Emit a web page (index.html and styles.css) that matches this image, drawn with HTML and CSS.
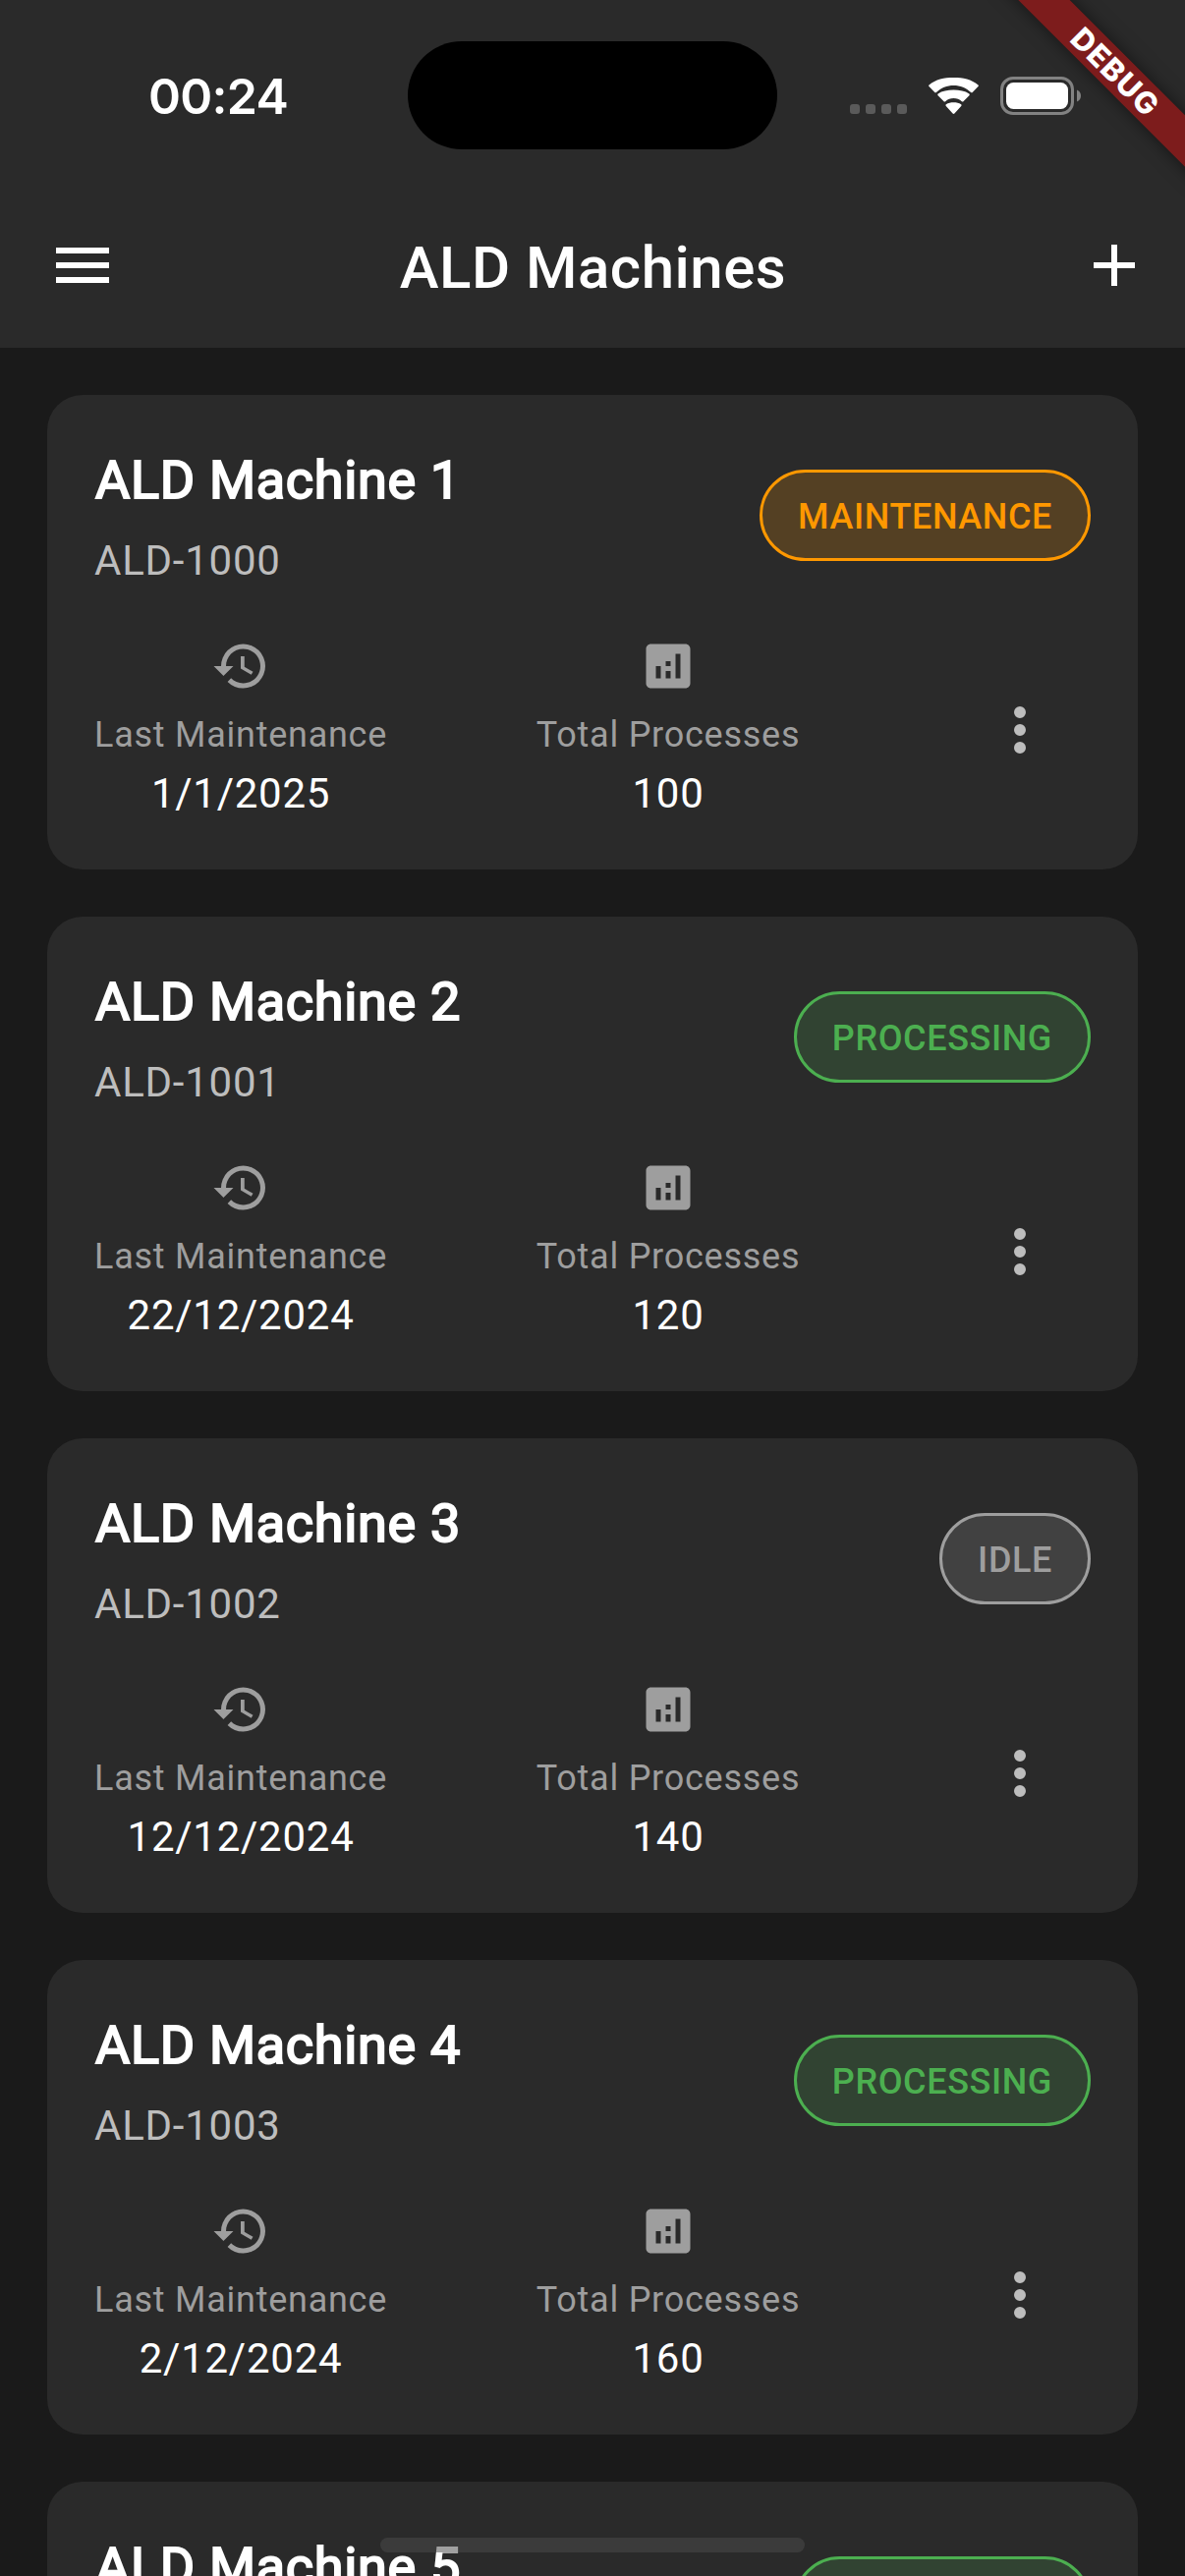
FILE: index.html
```html
<!DOCTYPE html>
<html lang="en">
<head>
<meta charset="utf-8">
<title>ALD Machines</title>
<link rel="stylesheet" href="styles.css">
</head>
<body>
<svg class="sprite" aria-hidden="true">
  <symbol id="history" viewBox="0 0 24 24"><path d="M13 3a9 9 0 0 0-9 9H1l3.890 3.890.07.14L9 12H6c0-3.870 3.130-7 7-7s7 3.130 7 7-3.130 7-7 7c-1.930 0-3.680-.79-4.940-2.060l-1.420 1.420A8.954 8.954 0 0 0 13 21a9 9 0 0 0 0-18zm-1 5v5l4.280 2.540.72-1.210-3.500-2.080V8H12z"/></symbol>
  <symbol id="analytics" viewBox="0 0 24 24"><path d="M19 3H5c-1.100 0-2 .9-2 2v14c0 1.100.9 2 2 2h14c1.100 0 2-.9 2-2V5c0-1.100-.9-2-2-2zM9 17H7v-5h2v5zm4 0h-2v-3h2v3zm0-5h-2v-2h2v2zm4 5h-2V7h2v10z"/></symbol>
  <symbol id="more" viewBox="0 0 24 24"><path d="M12 8a2 2 0 1 0 0-4 2 2 0 0 0 0 4zm0 2a2 2 0 1 0 0 4 2 2 0 0 0 0-4zm0 6a2 2 0 1 0 0 4 2 2 0 0 0 0-4z"/></symbol>
</svg>

<div class="screen">
  <header class="header">
    <div class="status-bar">
      <span class="clock">00:24</span>
      <span class="island"></span>
      <div class="indicators">
        <span class="signal"><i></i><i></i><i></i><i></i></span>
        <svg class="wifi" viewBox="0 0 51 38"><path d="M25.5 8c6.700 0 12.900 2.600 17.600 7 .5.4 1.200.4 1.600 0l5.800-5.900c.5-.5.5-1.200 0-1.700C43.800 1.800 35 0 25.500 0S7.200 1.800.5 7.400c-.5.500-.5 1.200 0 1.700l5.800 5.900c.4.400 1.100.4 1.600 0C12.600 10.600 18.800 8 25.500 8z"/><path d="M25.500 21c3.200 0 6.100 1.200 8.300 3.200.5.4 1.200.4 1.600 0l6-6c.5-.5.5-1.200 0-1.700C37.200 13.500 31.600 12.500 25.500 12.500S13.800 13.500 9.600 16.500c-.5.500-.5 1.200 0 1.700l6 6c.4.4 1.100.4 1.600 0 2.200-2 5.100-3.200 8.300-3.200z"/><path d="M33.200 29c.5-.5.5-1.200 0-1.700C31 25.800 28.400 25.300 25.500 25.300s-5.500.5-7.700 2c-.5.500-.5 1.200 0 1.700l6.800 7.500c.5.500 1.300.5 1.800 0z"/></svg>
        <svg class="battery" viewBox="0 0 82 39"><rect x="1.500" y="1.500" width="72" height="36" rx="11.500"/><rect class="charge" x="6" y="6" width="63" height="27" rx="7.500"/><path class="charge-tip" d="M78 13.500c2.500 1 4 3.200 4 6s-1.500 5-4 6z"/></svg>
      </div>
    </div>
    <div class="app-bar">
      <svg class="bar-icon" viewBox="0 0 24 24"><path d="M3 18h18v-2H3v2zm0-5h18v-2H3v2zm0-7v2h18V6H3z"/></svg>
      <h1 class="page-title">ALD Machines</h1>
      <svg class="bar-icon" viewBox="0 0 24 24"><path d="M19 13h-6v6h-2v-6H5v-2h6V5h2v6h6v2z"/></svg>
    </div>
  </header>

  <main class="machines">
    <article class="card">
      <div class="card-head">
        <div><h2 class="name">ALD Machine 1</h2><p class="serial">ALD-1000</p></div>
        <span class="badge maintenance">MAINTENANCE</span>
      </div>
      <div class="stats">
        <div class="stat"><svg><use href="#history"/></svg><span class="label">Last Maintenance</span><span class="value">1/1/2025</span></div>
        <div class="stat"><svg><use href="#analytics"/></svg><span class="label">Total Processes</span><span class="value">100</span></div>
        <div class="menu"><svg><use href="#more"/></svg></div>
      </div>
    </article>
    <article class="card">
      <div class="card-head">
        <div><h2 class="name">ALD Machine 2</h2><p class="serial">ALD-1001</p></div>
        <span class="badge processing">PROCESSING</span>
      </div>
      <div class="stats">
        <div class="stat"><svg><use href="#history"/></svg><span class="label">Last Maintenance</span><span class="value">22/12/2024</span></div>
        <div class="stat"><svg><use href="#analytics"/></svg><span class="label">Total Processes</span><span class="value">120</span></div>
        <div class="menu"><svg><use href="#more"/></svg></div>
      </div>
    </article>
    <article class="card">
      <div class="card-head">
        <div><h2 class="name">ALD Machine 3</h2><p class="serial">ALD-1002</p></div>
        <span class="badge idle">IDLE</span>
      </div>
      <div class="stats">
        <div class="stat"><svg><use href="#history"/></svg><span class="label">Last Maintenance</span><span class="value">12/12/2024</span></div>
        <div class="stat"><svg><use href="#analytics"/></svg><span class="label">Total Processes</span><span class="value">140</span></div>
        <div class="menu"><svg><use href="#more"/></svg></div>
      </div>
    </article>
    <article class="card">
      <div class="card-head">
        <div><h2 class="name">ALD Machine 4</h2><p class="serial">ALD-1003</p></div>
        <span class="badge processing">PROCESSING</span>
      </div>
      <div class="stats">
        <div class="stat"><svg><use href="#history"/></svg><span class="label">Last Maintenance</span><span class="value">2/12/2024</span></div>
        <div class="stat"><svg><use href="#analytics"/></svg><span class="label">Total Processes</span><span class="value">160</span></div>
        <div class="menu"><svg><use href="#more"/></svg></div>
      </div>
    </article>
    <article class="card">
      <div class="card-head">
        <div><h2 class="name">ALD Machine 5</h2><p class="serial"></p></div>
        <span class="badge processing badge-empty"></span>
      </div>
    </article>
  </main>

  <div class="debug-banner">DEBUG</div>
  <div class="home-indicator"></div>
</div>
</body>
</html>
```
FILE: styles.css
```css
* { box-sizing: border-box; margin: 0; }

body {
  background: #1a1a1a;
  color: #fff;
  font-family: Roboto, "Noto Sans", sans-serif;
}

.sprite { position: absolute; width: 0; height: 0; }

.screen {
  position: relative;
  width: 1206px;
  height: 2622px;
  overflow: hidden;
}

.header { height: 354px; background: #2a2a2a; }

.status-bar {
  display: grid;
  grid-template-columns: 415px 376px 1fr;
  height: 186px;
  padding-top: 42px;
}

.clock {
  padding-left: 29px;
  font: 600 50px/112px Inter, sans-serif;
  letter-spacing: -.7px;
  text-align: center;
}

.island { height: 110px; border-radius: 55px; background: #000; }

.indicators {
  display: flex;
  align-items: flex-start;
  padding: 36px 0 0 74px;
}

.signal { display: flex; gap: 4px; padding-top: 28px; }
.signal i { width: 10px; height: 10px; border-radius: 3px; background: #5a5a5a; }
.signal { gap: 6px; }

.wifi { width: 51px; height: 38px; margin: 1px 22px 0; fill: #fff; }

.battery { width: 82px; height: 39px; fill: none; stroke: #828282; stroke-width: 3; }
.charge { fill: #fff; stroke: none; }
.charge-tip { fill: #828282; stroke: none; }

.app-bar {
  display: flex;
  align-items: center;
  justify-content: space-between;
  height: 168px;
  padding: 0 36px 0 48px;
}

.bar-icon { width: 72px; height: 72px; fill: #fff; }

.page-title {
  margin-left: -11px;
  padding-top: 6px;
  font-size: 60px;
  font-weight: 500;
  line-height: 84px;
  letter-spacing: .5px;
}

.machines {
  display: flex;
  flex-direction: column;
  gap: 48px;
  padding: 48px;
}

.card {
  flex: none;
  height: 483px;
  padding: 48px;
  border-radius: 36px;
  background: #2a2a2a;
}

.card-head {
  display: flex;
  align-items: center;
  justify-content: space-between;
  height: 150px;
}

.name {
  height: 90px;
  padding-left: 1px;
  font-size: 54px;
  font-weight: 400;
  line-height: 77px;
  letter-spacing: .7px;
  -webkit-text-stroke: 2px #fff;
}

.serial {
  height: 60px;
  font-size: 42px;
  line-height: 62px;
  letter-spacing: .75px;
  color: #bdbdbd;
}

.badge {
  height: 93px;
  margin-bottom: 1px;
  padding: 0 36px;
  border: 3px solid;
  border-radius: 47px;
  font-size: 36px;
  font-weight: 500;
  line-height: 91px;
  letter-spacing: .6px;
}

.badge-empty { width: 302px; }

.maintenance { color: #ff9800; background: #544023; }
.processing { color: #4caf50; background: #314332; }
.idle { color: #9e9e9e; background: #414141; }

.stats {
  display: flex;
  align-items: center;
  justify-content: space-between;
  height: 189px;
  margin-top: 48px;
}

.stat { display: flex; flex-direction: column; align-items: center; height: 189px; }
.stat svg { flex: none; width: 60px; height: 60px; fill: #9e9e9e; }

.label {
  margin-top: 15px;
  font-size: 36px;
  line-height: 51px;
  letter-spacing: .75px;
  color: #9e9e9e;
}

.value { margin-top: 4px; font-size: 42px; line-height: 60px; letter-spacing: .75px; }

.menu { display: flex; justify-content: center; width: 144px; }
.menu svg { width: 72px; height: 72px; fill: #bdbdbd; }

.debug-banner {
  position: absolute;
  left: 984px;
  top: 53px;
  width: 300px;
  height: 37px;
  padding-left: 4px;
  background: #7d1c1c;
  box-shadow: 0 0 18px rgba(0, 0, 0, .5);
  font: 800 30.6px/37px Inter, sans-serif;
  letter-spacing: 1.2px;
  text-align: center;
  transform: rotate(45deg);
}

.home-indicator {
  position: absolute;
  left: 387px;
  top: 2583px;
  width: 432px;
  height: 15px;
  border-radius: 8px;
  background: rgba(76, 76, 76, .53);
}
```
